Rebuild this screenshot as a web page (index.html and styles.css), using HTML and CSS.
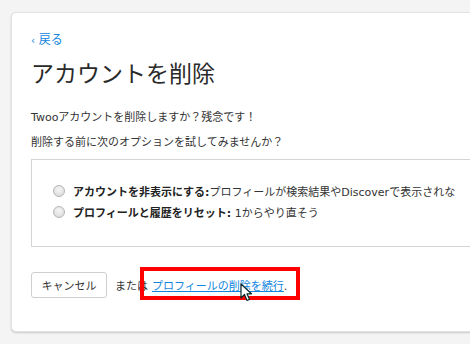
FILE: index.html
```html
<!DOCTYPE html>
<html lang="ja">
<head>
  <meta charset="UTF-8" />
  <meta name="viewport" content="width=device-width, initial-scale=1.0"/>
  <title>アカウントを削除</title>
  <link rel="stylesheet" href="styles.css">
</head>
<body>
  <div class="card">
    <a class="back" href="#"><span class="chev">‹</span> 戻る</a>
    <h1>アカウントを削除</h1>

    <p class="intro">Twooアカウントを削除しますか？残念です！</p>
    <p class="intro">削除する前に次のオプションを試してみませんか？</p>

    <div class="options">
      <label class="option">
        <input type="radio" name="opt" />
        <span><b>アカウントを非表示にする:</b>プロフィールが検索結果やDiscoverで表示されな</span>
      </label>
      <label class="option">
        <input type="radio" name="opt" />
        <span><b>プロフィールと履歴をリセット:</b> 1からやり直そう</span>
      </label>
    </div>

    <div class="actions">
      <button type="button" class="cancel">キャンセル</button>
      <span class="or">または</span>
      <span class="continue"><a href="#">プロフィールの削除を続行</a>.</span>
      <span class="highlight"></span>
      <svg class="cursor" width="13" height="20" viewBox="0 0 13 20">
        <path d="M1 1 L1 15 L4.5 11.5 L7 17.5 L9.5 16.5 L7 10.8 L11.5 10.8 Z" fill="#fff" stroke="#0b2a2a" stroke-width="1.2" stroke-linejoin="round"/>
      </svg>
    </div>
  </div>
</body>
</html>
```

FILE: styles.css
```css
* {
  margin: 0;
  padding: 0;
  box-sizing: border-box;
}

body {
  background: #f4f4f4;
  font-family: "DejaVu Sans", "Noto Sans CJK JP", sans-serif;
  font-size: 11px;
  color: #333;
  padding: 12px 0 0 11px;
  overflow: hidden;
  width: 470px;
  height: 344px;
}

.card {
  width: 600px;
  height: 320px;
  background: #fff;
  border: 1px solid #e2e2e2;
  border-radius: 5px;
  box-shadow: 0 1px 2px rgba(0, 0, 0, 0.18);
  padding: 18px 19px 0;
}

.back {
  display: block;
  line-height: 18px;
  font-size: 12px;
  color: #1186e0;
  text-decoration: none;
}

.back .chev {
  font-size: 10px;
}

h1 {
  margin-top: 6px;
  font-family: "Noto Sans CJK JP", sans-serif;
  font-size: 23px;
  font-weight: normal;
  line-height: 32px;
  color: #2a2a2a;
}

.intro {
  line-height: 18px;
  margin-bottom: 7px;
}

h1 + .intro {
  margin-top: 21px;
}

.options {
  margin-top: 3px;
  height: 88px;
  border: 1px solid #d4d4d4;
  border-right: none;
  padding: 20px 0 0 21px;
}

.option {
  display: flex;
  align-items: center;
  gap: 8px;
  height: 21px;
  white-space: nowrap;
}

.option b {
  font-weight: bold;
  color: #222;
}

.option input {
  appearance: none;
  width: 12px;
  height: 12px;
  border-radius: 50%;
  border: 1px solid #b5b5b5;
  background: radial-gradient(circle at 50% 35%, #f6f6f6, #d6d6d6);
  flex: none;
}

.actions {
  position: relative;
  display: flex;
  align-items: center;
  margin-top: 25px;
  height: 26px;
}

.cancel {
  height: 26px;
  width: 76px;
  font-family: inherit;
  font-size: 11px;
  color: #333;
  background: #fff;
  border: 1px solid #cfcfcf;
  border-radius: 3px;
}

.or {
  margin-left: 8px;
}

.continue {
  margin-left: 4px;
}

.continue a {
  color: #1186e0;
}

.highlight {
  position: absolute;
  left: 109px;
  top: -5px;
  width: 160px;
  height: 33px;
  border: 4px solid #ff0000;
}

.cursor {
  position: absolute;
  left: 209px;
  top: 11px;
}
```
